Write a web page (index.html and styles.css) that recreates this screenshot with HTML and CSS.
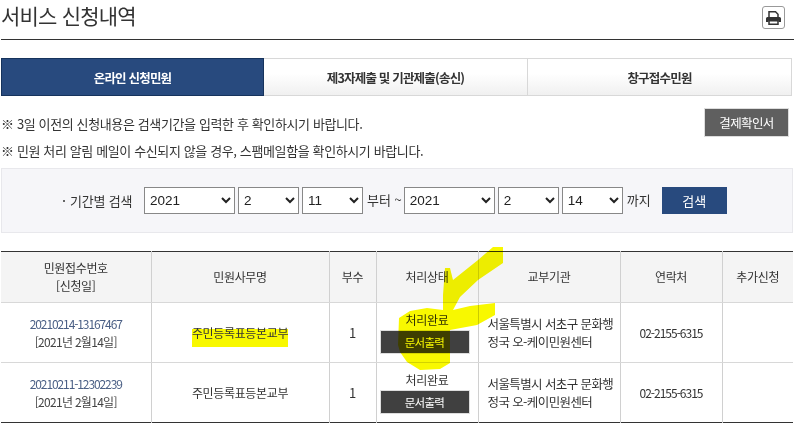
FILE: index.html

```html
<!DOCTYPE html>
<html lang="ko">
<head>
  <meta charset="UTF-8" />
  <title>서비스 신청내역</title>
  <link rel="stylesheet" href="styles.css">
</head>
<body>

  <div class="page">
    <div class="title-bar">
      <h1>서비스 신청내역</h1>
      <button class="print-btn" aria-label="인쇄">
        <svg width="15" height="14" viewBox="0 0 15 14">
          <path fill="none" stroke="#333" stroke-width="1.500" d="M3 6.500V.8h6.500L12 3.200v3.300"/>
          <path fill="#333" d="M1.500 6h12A1.500 1.500 0 0 1 15 7.500V11h-2.500V9.500h-10V11H0V7.500A1.500 1.500 0 0 1 1.500 6z"/>
          <path fill="#fff" stroke="#333" stroke-width="1.500" d="M3 9.800h9v3.400H3z"/>
        </svg>
      </button>
    </div>

    <div class="tabs">
      <a class="tab active">온라인 신청민원</a>
      <a class="tab">제3자제출 및 기관제출(송신)</a>
      <a class="tab">창구접수민원</a>
    </div>

    <div class="notice-row">
      <div class="notices">
        <p>※ 3일 이전의 신청내용은 검색기간을 입력한 후 확인하시기 바랍니다.</p>
        <p>※ 민원 처리 알림 메일이 수신되지 않을 경우, 스팸메일함을 확인하시기 바랍니다.</p>
      </div>
      <button class="pay-btn">결제확인서</button>
    </div>

    <div class="search-box">
      <span class="search-label">기간별 검색</span>
      <select class="sel-year"><option>2021</option></select>
      <select class="sel-small"><option>2</option></select>
      <select class="sel-small"><option>11</option></select>
      <span class="search-text">부터 ~</span>
      <select class="sel-year"><option>2021</option></select>
      <select class="sel-small"><option>2</option></select>
      <select class="sel-small"><option>14</option></select>
      <span class="search-text">까지</span>
      <button class="search-btn">검색</button>
    </div>

    <table class="list">
      <colgroup>
        <col class="c-no"><col class="c-name"><col class="c-count"><col class="c-state"><col class="c-org"><col class="c-tel"><col class="c-add">
      </colgroup>
      <thead>
        <tr>
          <th>민원접수번호<br>[신청일]</th>
          <th>민원사무명</th>
          <th>부수</th>
          <th>처리상태</th>
          <th>교부기관</th>
          <th>연락처</th>
          <th>추가신청</th>
        </tr>
      </thead>
      <tbody>
        <tr>
          <td class="no"><span class="no-num">20210214-13167467</span><br>[2021년 2월14일]</td>
          <td><span class="marked">주민등록표등본교부</span></td>
          <td class="count">1</td>
          <td class="state">처리완료<button class="doc-btn">문서출력</button></td>
          <td class="org">서울특별시 서초구 문화행정국 오-케이민원센터</td>
          <td class="tel">02-2155-6315</td>
          <td></td>
        </tr>
        <tr>
          <td class="no"><span class="no-num">20210211-12302239</span><br>[2021년 2월14일]</td>
          <td>주민등록표등본교부</td>
          <td class="count">1</td>
          <td class="state">처리완료<button class="doc-btn">문서출력</button></td>
          <td class="org">서울특별시 서초구 문화행정국 오-케이민원센터</td>
          <td class="tel">02-2155-6315</td>
          <td></td>
        </tr>
      </tbody>
    </table>

    <!-- hand drawn marker arrow on top of the table -->
    <svg class="scribble" width="795" height="436" viewBox="0 0 795 436">
      <path fill="#f8f800" d="M493 247L503 247L503 263L478 280L460 297L453 310L470 306L495 303L495 315L477 325L450 330L450 363L440 369L420 370L407 362L400 352L398 345L399 318L410 311L427 308L443 310L443 295L445 268L450 268L453 280L478 260Z"/>
    </svg>
  </div>

</body>
</html>
```

FILE: styles.css

```css
* {
  box-sizing: border-box;
}
body {
  margin: 0;
  font-family: "Noto Sans CJK KR", "Liberation Sans", sans-serif;
  font-size: 12px;
  color: #333;
  background: #fff;
}
button {
  font-family: inherit;
  cursor: pointer;
}
.page {
  position: relative;
  width: 795px;
  height: 436px;
  padding-left: 1px;
  overflow: hidden;
}

.title-bar {
  width: 793px;
  height: 40px;
  display: flex;
  justify-content: space-between;
  align-items: flex-start;
  padding: 6px 9px 0 0;
  border-bottom: 1px solid #333;
}
h1 {
  margin: 0;
  margin-top: -6px;
  font-size: 21px;
  font-weight: 400;
  line-height: 30px;
  letter-spacing: -0.8px;
  color: #333;
}
.print-btn {
  width: 23px;
  height: 23px;
  padding: 0;
  display: flex;
  align-items: center;
  justify-content: center;
  background: #fff;
  border: 1px solid #999;
  border-radius: 3px;
}

.tabs {
  display: grid;
  grid-template-columns: 263px 264px 264px;
  width: 791px;
  height: 38px;
  margin-top: 18px;
}
.tab {
  display: flex;
  align-items: center;
  justify-content: center;
  font-size: 12.5px;
  font-weight: 700;
  letter-spacing: -0.8px;
  color: #333;
  border: 1px solid #d8d8d8;
  border-left: 0;
  background: linear-gradient(#fff 40%, #f0f0f0);
}
.tab.active {
  color: #fff;
  background: #284a7e;
  border: 1px solid #16335c;
}

.notice-row {
  display: flex;
  justify-content: space-between;
  align-items: flex-start;
  width: 788px;
  height: 72px;
}
.notices p {
  margin: 0;
  font-size: 13px;
  line-height: 27px;
  letter-spacing: -0.38px;
  color: #333;
}
.notices {
  padding-top: 14px;
}
.pay-btn {
  width: 85px;
  height: 29px;
  margin-top: 12px;
  padding: 0;
  font-size: 12.5px;
  letter-spacing: -0.6px;
  color: #fff;
  background: #5f5f5f;
  border: 1px solid #ddd;
}

.search-box {
  display: flex;
  align-items: center;
  width: 792px;
  height: 65px;
  padding-left: 59px;
  background: #f6f6f9;
  border: 1px solid #e8e8ec;
}
.search-label {
  position: relative;
  width: 83px;
  padding-left: 9px;
  font-size: 13px;
  letter-spacing: -0.2px;
}
.search-label::before {
  content: "";
  position: absolute;
  left: 2px;
  top: 9px;
  width: 2px;
  height: 2px;
  background: #666;
}
select {
  height: 27px;
  margin-right: 3px;
  padding-left: 1px;
  font-family: "Liberation Sans", sans-serif;
  font-size: 13.5px;
  color: #222;
  background: #fff;
  border: 1px solid #888;
}
.sel-year {
  width: 91px;
}
.sel-small {
  width: 61px;
}
.search-text {
  font-size: 13px;
  margin: -2px 2px 0 1px;
}
.search-btn {
  width: 65px;
  height: 27px;
  margin-left: 9px;
  padding: 0;
  font-size: 13px;
  color: #fff;
  background: #284a7e;
  border: 0;
}

.list {
  width: 792px;
  margin-top: 18px;
  table-layout: fixed;
  border-collapse: collapse;
  border-top: 1px solid #333;
  border-bottom: 1px solid #333;
}
.c-no { width: 150px; }
.c-name { width: 178px; }
.c-count { width: 47px; }
.c-state { width: 102px; }
.c-org { width: 142px; }
.c-tel { width: 102px; }
.c-add { width: 71px; }
th, td {
  text-align: center;
  vertical-align: middle;
  padding: 0;
  border-left: 1px solid #d0d0d0;
  letter-spacing: -0.35px;
}
th:first-child, td:first-child {
  border-left: 0;
}
th {
  height: 51px;
  font-weight: 400;
  line-height: 18px;
  background: #f4f4f4;
  border-bottom: 1px solid #d8d8d8;
}
td {
  height: 60px;
  line-height: 18px;
  border-bottom: 1px solid #d8d8d8;
}
tbody tr:last-child td {
  border-bottom: 0;
}
td.no {
  color: #444;
  letter-spacing: -0.7px;
}
.no-num {
  color: #4a5f85;
  letter-spacing: -1.1px;
}
.count {
  font-size: 13px;
}
.marked {
  padding: 0 0 6px;
  background: linear-gradient(transparent 5px, #f8f800 5px);
}
td.tel {
  letter-spacing: -1px;
}
.state {
  line-height: 16px;
}
.doc-btn {
  display: block;
  width: 90px;
  height: 24px;
  margin: 2px 0 0 3px;
  padding: 0;
  font-size: 11.5px;
  letter-spacing: -0.7px;
  color: #fff;
  background: #404040;
  border: 1px solid #ddd;
}
td.org {
  padding: 0 4px 0 9px;
  text-align: left;
  font-size: 12.5px;
  line-height: 18px;
  letter-spacing: -0.6px;
  word-break: break-all;
}

.scribble {
  position: absolute;
  left: 0;
  top: 0;
  mix-blend-mode: multiply;
  pointer-events: none;
}
```
